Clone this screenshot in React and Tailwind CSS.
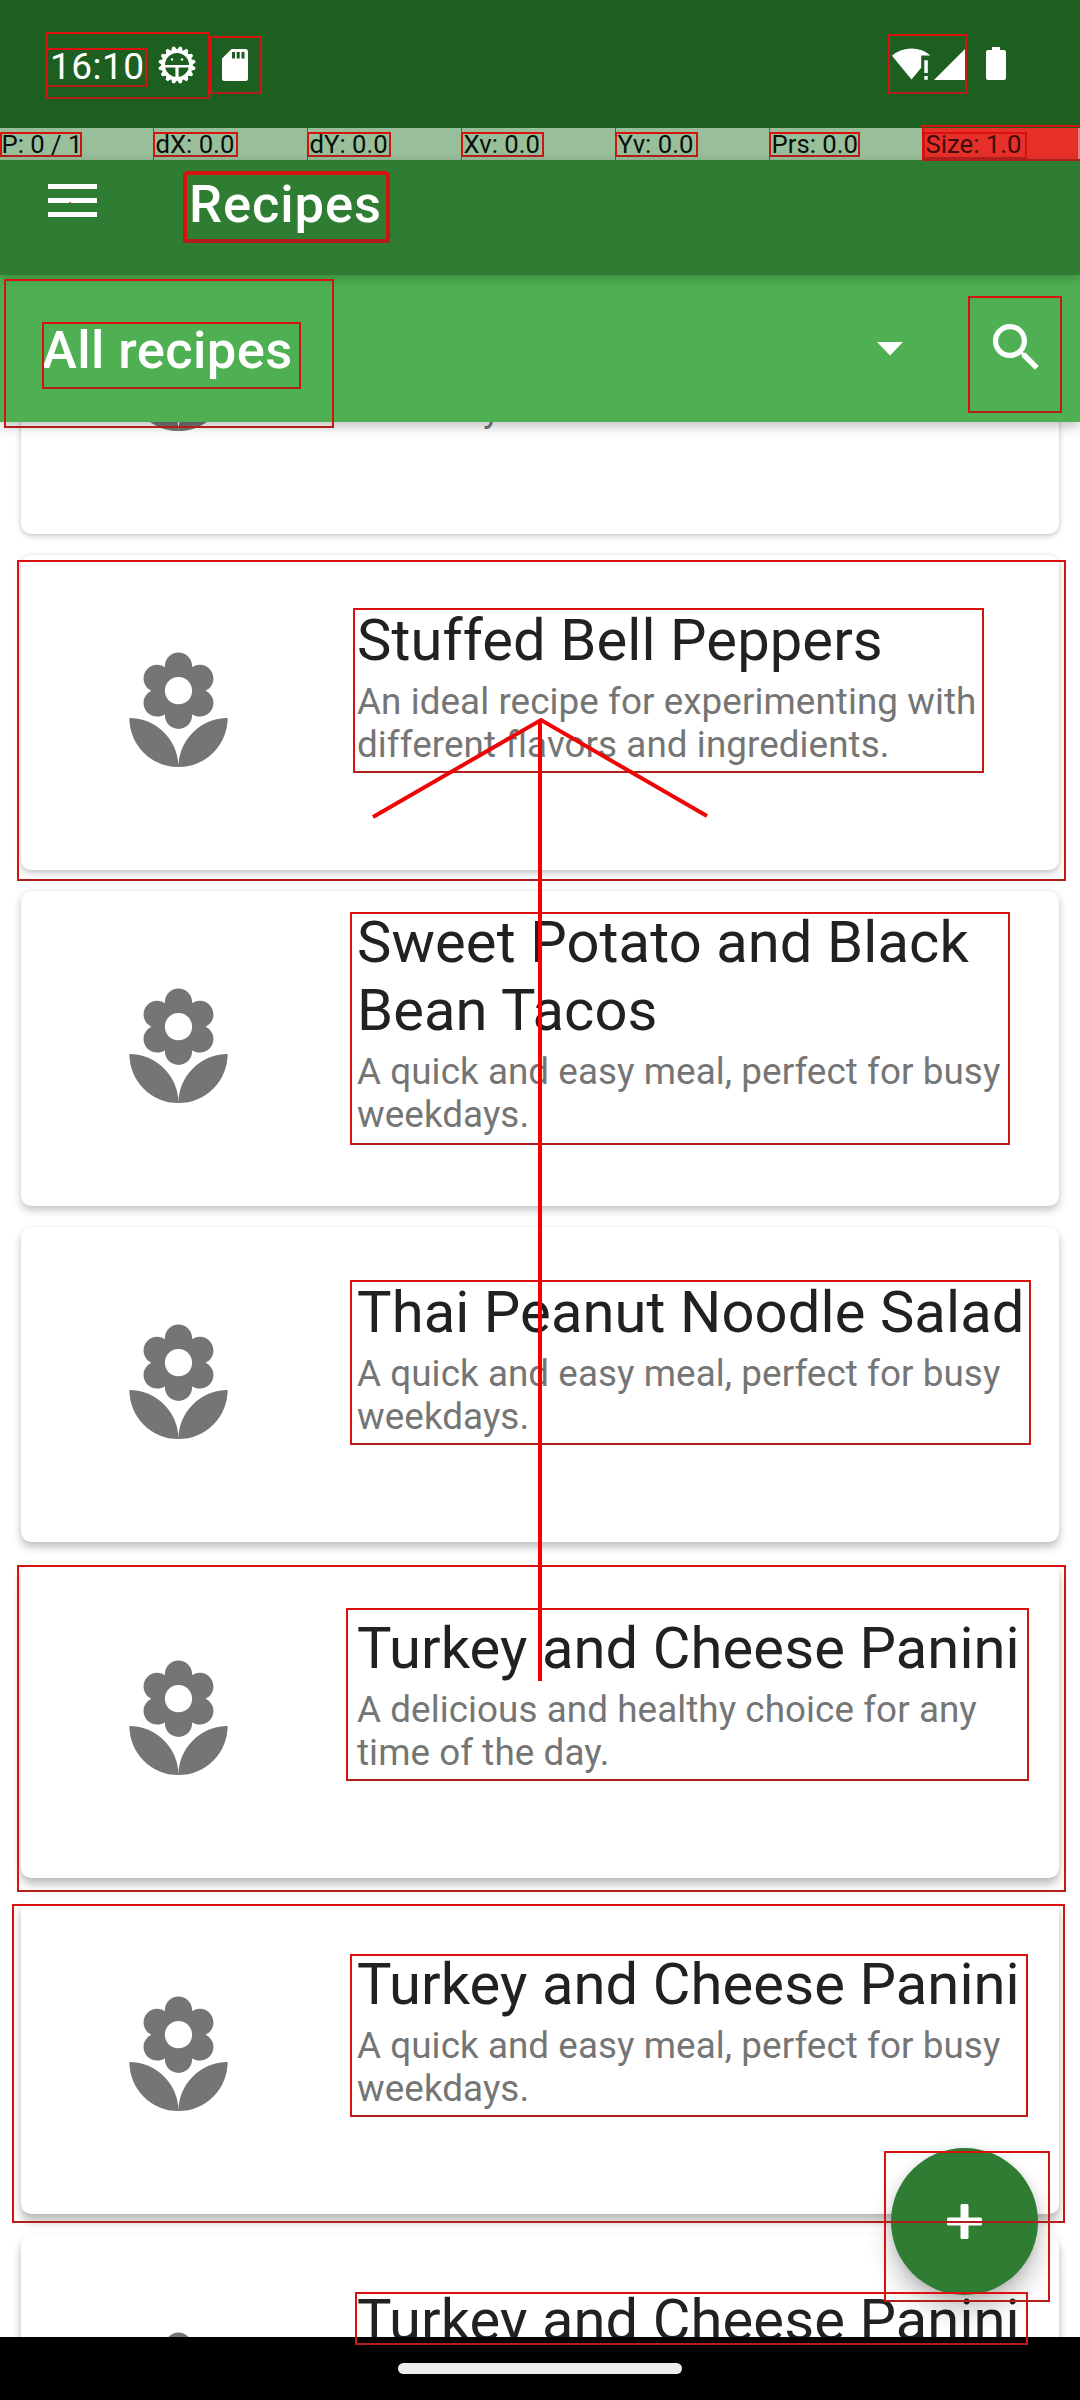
import React from "react";

const QUICK = "A quick and easy meal, perfect for busy weekdays.";

const RECIPES = [
  { title: "\u00a0", text: QUICK, shadow: "shadow-[0_2px_6px_rgba(0,0,0,0.2),0_0_3px_rgba(0,0,0,0.1)]" },
  {
    title: "Stuffed Bell Peppers",
    text: "An ideal recipe for experimenting with different flavors and ingredients.",
    shadow: "shadow-[0_3px_7px_rgba(0,0,0,0.22),0_0_3px_rgba(0,0,0,0.08)]",
  },
  {
    title: "Sweet Potato and Black Bean Tacos",
    text: QUICK,
    shadow: "shadow-[0_4px_8px_rgba(0,0,0,0.24),0_0_2px_rgba(0,0,0,0.08)]",
  },
  {
    title: "Thai Peanut Noodle Salad",
    text: QUICK,
    shadow: "shadow-[0_5px_9px_rgba(0,0,0,0.25),0_0_2px_rgba(0,0,0,0.07)]",
  },
  {
    title: "Turkey and Cheese Panini",
    text: "A delicious and healthy choice for any time of the day.",
    shadow: "shadow-[0_6px_10px_rgba(0,0,0,0.27),0_0_2px_rgba(0,0,0,0.06)]",
  },
  {
    title: "Turkey and Cheese Panini",
    text: QUICK,
    shadow: "shadow-[0_7px_10px_rgba(0,0,0,0.28),0_0_2px_rgba(0,0,0,0.05)]",
  },
  {
    title: "Turkey and Cheese Panini",
    text: QUICK,
    shadow: "shadow-[0_7px_10px_rgba(0,0,0,0.28),0_0_2px_rgba(0,0,0,0.05)]",
  },
];

const POINTER = ["P: 0 / 1", "dX: 0.0", "dY: 0.0", "Xv: 0.0", "Yv: 0.0", "Prs: 0.0", "Size: 1.0"];

// Highlight frames laid over the interface: left, top, right, bottom.
const FRAMES = [
  [46, 32, 210, 99],
  [46, 48, 147, 87],
  [210, 36, 262, 94],
  [888, 34, 967, 94],
  [0, 132, 82, 157],
  [153, 132, 238, 157],
  [307, 132, 391, 157],
  [461, 132, 544, 157],
  [615, 132, 698, 157],
  [769, 132, 860, 157],
  [923, 132, 1027, 159],
  [922, 125, 1082, 161],
  [183, 173, 390, 243],
  [185, 171, 388, 241],
  [4, 279, 334, 428],
  [42, 322, 301, 389],
  [968, 296, 1062, 413],
  [17, 560, 1066, 881],
  [353, 608, 984, 773],
  [350, 912, 1010, 1145],
  [350, 1280, 1031, 1445],
  [17, 1565, 1066, 1892],
  [346, 1608, 1029, 1781],
  [12, 1904, 1065, 2223],
  [350, 1954, 1028, 2117],
  [884, 2151, 1050, 2302],
  [355, 2292, 1028, 2345],
];

function DebugIcon() {
  const teeth = Array.from({ length: 16 }, (_, i) => i * 22.5);
  return (
    <svg className="h-[38px] w-[38px]" viewBox="-19 -19 38 38" fill="#fff">
      {teeth.map((a) => (
        <path key={a} d="M-3.4 -14 L-1.2 -18.6 H1.2 L3.4 -14 Z" transform={`rotate(${a + 11.25})`} />
      ))}
      <circle r="13.8" fill="none" stroke="#fff" strokeWidth="3.6" />
      <path d="M-13 0H13V2.6H1.6V14H-1.6V2.6H-13Z" />
      <circle cx="-5" cy="-5.5" r="1.2" />
      <circle cx="5" cy="-5.5" r="1.2" />
    </svg>
  );
}

function SdIcon() {
  return (
    <svg className="h-8 w-[26px]" viewBox="0 0 26 32" fill="#fff">
      <path
        fillRule="evenodd"
        d="M9.5 0H23.5Q26 0 26 2.5V29.5Q26 32 23.5 32H2.5Q0 32 0 29.5V9.5ZM10 3V9.5H13V3ZM14.7 3V9.5H17.7V3ZM19.5 3V9.5H22.5V3Z"
      />
    </svg>
  );
}

function WifiIcon() {
  return (
    <svg className="h-[34px] w-[39px]" viewBox="0 0 39 34" fill="#fff">
      <path d="M19.5 32.5L0 8.8Q8.5 1.6 19.5 1.6T38.5 8.5H29.2V20.8Z" />
      <path d="M32.3 13.2H35.8V26H32.3ZM32.3 29H35.8V32.8H32.3Z" />
    </svg>
  );
}

function FlowerIcon() {
  return (
    <svg className="h-[131px] w-[131px]" viewBox="0 0 24 24" fill="#757575">
      <path d="M12 22c4.97 0 9-4.03 9-9-4.97 0-9 4.03-9 9zM5.6 10.25c0 1.38 1.12 2.5 2.5 2.5.53 0 1.01-.16 1.42-.44l-.02.19c0 1.38 1.12 2.5 2.5 2.5s2.5-1.12 2.5-2.5l-.02-.19c.4.28.89.44 1.42.44 1.38 0 2.5-1.12 2.5-2.5 0-1-.59-1.85-1.43-2.25.84-.4 1.43-1.25 1.43-2.25 0-1.38-1.12-2.5-2.5-2.5-.53 0-1.01.16-1.42.44l.02-.19C14.5 2.12 13.38 1 12 1S9.5 2.12 9.5 3.5l.02.19c-.4-.28-.89-.44-1.42-.44-1.38 0-2.5 1.12-2.5 2.5 0 1 .59 1.85 1.43 2.25-.84.4-1.43 1.25-1.43 2.25zM12 5.5c1.38 0 2.5 1.12 2.5 2.5s-1.12 2.5-2.5 2.5S9.5 9.38 9.5 8s1.12-2.5 2.5-2.5zM3 13c0 4.97 4.03 9 9 9 0-4.97-4.03-9-9-9z" />
    </svg>
  );
}

function StatusBar() {
  return (
    <header className="flex h-32 items-start justify-between bg-[#1d5f20] pr-[74px] pl-[50px] text-white">
      <div className="flex pt-[45px]">
        <span className="w-[108px] text-[37px] leading-[44px] tracking-[0.5px]">16:10</span>
        <div className="pt-px">
          <DebugIcon />
        </div>
        <div className="pt-1 pl-[26px]">
          <SdIcon />
        </div>
      </div>
      <div className="flex pt-[47px]">
        <WifiIcon />
        <svg className="mt-[2px] ml-[3px] h-[31px] w-[31px]" viewBox="0 0 31 31" fill="#fff">
          <path d="M0 31L31 0V31Z" />
        </svg>
        <svg className="ml-[21px] h-[33px] w-5" viewBox="0 0 20 33" fill="#fff">
          <path d="M6 0H14V3H18Q20 3 20 5V31Q20 33 18 33H2Q0 33 0 31V5Q0 3 2 3H6Z" />
        </svg>
      </div>
    </header>
  );
}

function PointerBar() {
  return (
    <div className="flex h-8 gap-px bg-[#2f7d32] text-[25.7px] leading-8 text-[#0a0f0a]">
      {POINTER.map((label, i) => (
        <div
          key={label}
          className={
            i === 6
              ? "w-[153px] shrink-0 bg-[#e7302a] pl-[1.5px] text-[#3c0d0b]"
              : "w-[153px] shrink-0 bg-[#98bf9a] pl-[1.5px]"
          }
        >
          {label}
        </div>
      ))}
      <div className="grow bg-[#d98a7c]" />
    </div>
  );
}

function RecipeCard({ title, text, shadow }) {
  return (
    <article className={`flex h-[315px] shrink-0 rounded-[10px] bg-white ${shadow}`}>
      <div className="flex w-[315px] items-center justify-center">
        <FlowerIcon />
      </div>
      <div className="ml-[21px] flex w-[683px] flex-col justify-center pb-[54px]">
        <h2 className="text-[57.9px] leading-[68px] tracking-[0.1px] text-[#212121]">{title}</h2>
        <p className="mt-[6px] text-[36.8px] leading-[43px] tracking-[0.07px] text-[#757575]">{text}</p>
      </div>
    </article>
  );
}

export default function App() {
  return (
    <div className="relative flex h-[2400px] w-[1080px] flex-col overflow-hidden bg-white font-[Roboto,sans-serif]">
      <StatusBar />
      <PointerBar />

      <div className="z-20 flex h-[115px] items-start bg-[#2f7d32] pl-12 text-white shadow-[0_3px_10px_rgba(0,0,0,0.25)]">
        <div className="mt-6 flex w-[49px] flex-col gap-[9px]">
          <div className="h-[5px] bg-white" />
          <div className="h-[5px] bg-white" />
          <div className="h-[5px] bg-white" />
        </div>
        <h1 className="mt-[13px] ml-[92px] text-[52.5px] leading-[62px] font-medium tracking-[0.9px]">Recipes</h1>
      </div>

      <div className="z-10 flex h-[147px] items-start bg-[#4eb052] pl-[42px] text-white shadow-[0_4px_12px_rgba(0,0,0,0.25)]">
        <span className="mt-11 w-[835px] text-[52.5px] leading-[62px] font-medium tracking-[0.4px]">All recipes</span>
        <svg className="mt-[67px] h-[14px] w-[26px]" viewBox="0 0 26 14" fill="#fff">
          <path d="M0 0H26L13 13.5Z" />
        </svg>
        <svg className="mt-[41px] ml-[82px] h-[63px] w-[63px]" viewBox="0 0 24 24" fill="#fff">
          <path d="M15.5 14h-.79l-.28-.27C15.41 12.59 16 11.11 16 9.5 16 5.91 13.09 3 9.5 3S3 5.91 3 9.5 5.91 16 9.5 16c1.61 0 3.09-.59 4.23-1.57l.27.28v.79l5 4.99L20.49 19l-4.99-5zm-6 0C7.01 14 5 11.99 5 9.5S7.01 5 9.5 5 14 7.01 14 9.5 11.99 14 9.5 14z" />
        </svg>
      </div>

      <main className="h-[1915px] shrink-0 overflow-hidden px-[21px]">
        <div className="-mt-[203px] flex flex-col gap-[21px]">
          {RECIPES.map((r, i) => (
            <RecipeCard key={i} {...r} />
          ))}
        </div>
      </main>

      <div className="z-20 flex h-[63px] justify-center bg-black pt-[26px]">
        <div className="h-[11px] w-[284px] rounded-full bg-[#ececec]" />
      </div>

      <button className="absolute top-[2148px] left-[891px] z-10 flex h-[147px] w-[147px] items-center justify-center rounded-full bg-[#2f7d32] shadow-[0_16px_26px_rgba(0,0,0,0.24),0_2px_10px_rgba(0,0,0,0.1)]">
        <svg className="h-[35px] w-[35px]" viewBox="0 0 35 35" fill="#fff">
          <rect x="13.5" y="0" width="8" height="35" rx="1.5" />
          <rect x="0" y="13.5" width="35" height="8" rx="1.5" />
        </svg>
      </button>

      <div className="pointer-events-none absolute inset-0 z-30">
        {FRAMES.map(([l, t, r, b], i) => (
          <div
            key={i}
            className="absolute border-2 border-t-[#d91210] border-r-[#cf1512] border-b-[#b01f1c] border-l-[#d91210]"
            style={{ left: l, top: t, width: r - l, height: b - t }}
          />
        ))}
        <svg className="absolute inset-0 h-full w-full" viewBox="0 0 1080 2400" fill="none" stroke="#ee0606">
          <path d="M540 720V1681" stroke="#f80000" strokeWidth="4" />
          <path d="M373 817L541 720L707 816" strokeWidth="4" />
          <circle cx="70" cy="203" r="1" fill="#a33a1a" stroke="none" />
        </svg>
      </div>
    </div>
  );
}
